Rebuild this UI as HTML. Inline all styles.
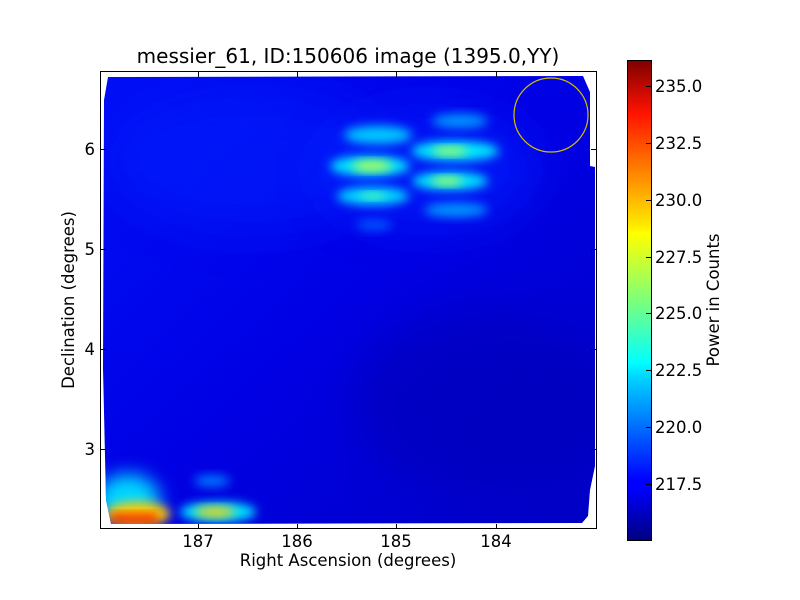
<!DOCTYPE html>
<html><head><style>
html,body{margin:0;padding:0;background:#fff;width:800px;height:600px;overflow:hidden}
svg text{font-family:"DejaVu Sans","Liberation Sans",sans-serif;fill:#000}
</style></head><body>
<svg width="800" height="600" viewBox="0 0 800 600" xmlns="http://www.w3.org/2000/svg">
<defs>
<linearGradient id="jet" x1="0" y1="1" x2="0" y2="0">
<stop offset="0" stop-color="#00007f"/>
<stop offset="0.11" stop-color="#0000ff"/>
<stop offset="0.125" stop-color="#0000ff"/>
<stop offset="0.34" stop-color="#00d4ff"/>
<stop offset="0.37" stop-color="#0ff"/>
<stop offset="0.5" stop-color="#7dff7a"/>
<stop offset="0.64" stop-color="#ff0"/>
<stop offset="0.66" stop-color="#ffe600"/>
<stop offset="0.89" stop-color="#ff1300"/>
<stop offset="1" stop-color="#7f0000"/>
</linearGradient>
<linearGradient id="bg" x1="0" y1="0" x2="1" y2="1">
<stop offset="0" stop-color="#0010f8"/>
<stop offset="0.5" stop-color="#0000e4"/>
<stop offset="1" stop-color="#0000c4"/>
</linearGradient>
<filter id="b4" x="-50%" y="-50%" width="200%" height="200%"><feGaussianBlur stdDeviation="5"/></filter>
<filter id="b8" x="-50%" y="-50%" width="200%" height="200%"><feGaussianBlur stdDeviation="9"/></filter>
<filter id="b20" x="-50%" y="-50%" width="200%" height="200%"><feGaussianBlur stdDeviation="22"/></filter>
<filter id="b1"><feGaussianBlur stdDeviation="1.2"/></filter>
<clipPath id="cp"><path d="M108 77 L583 76 L590 92 L590 166 L595 167 L595 466 L590 490 L588 516 L582 523 L111 524 L106 500 L103 368 L104 100 Z"/></clipPath>
</defs>
<text x="348" y="63" font-size="20" text-anchor="middle">messier_61, ID:150606 image (1395.0,YY)</text>
<g clip-path="url(#cp)">
<rect x="100" y="72" width="497" height="457" fill="url(#bg)"/>
<ellipse cx="480" cy="400" rx="130" ry="90" fill="#0000b0" opacity="0.5" filter="url(#b20)"/>
<ellipse cx="250" cy="160" rx="140" ry="70" fill="#0020ff" opacity="0.5" filter="url(#b20)"/>
<ellipse cx="430" cy="170" rx="110" ry="60" fill="#0020ff" opacity="0.6" filter="url(#b20)"/>
<ellipse cx="378" cy="135" rx="34" ry="9" fill="#00c8ff" filter="url(#b4)"/>
<ellipse cx="370" cy="166" rx="40" ry="10" fill="#00e8ff" filter="url(#b4)"/>
<ellipse cx="372" cy="166" rx="20" ry="5" fill="#c0ff40" filter="url(#b4)"/>
<ellipse cx="373" cy="196" rx="36" ry="9" fill="#00d8ff" filter="url(#b4)"/>
<ellipse cx="373" cy="196" rx="14" ry="3" fill="#60ffa0" filter="url(#b4)"/>
<ellipse cx="460" cy="121" rx="28" ry="7" fill="#0098ff" filter="url(#b4)"/>
<ellipse cx="455" cy="151" rx="44" ry="10" fill="#00e8ff" filter="url(#b4)"/>
<ellipse cx="450" cy="151" rx="18" ry="4" fill="#b0ff50" filter="url(#b4)"/>
<ellipse cx="450" cy="181" rx="38" ry="9" fill="#00e8ff" filter="url(#b4)"/>
<ellipse cx="447" cy="181" rx="16" ry="4" fill="#b0ff50" filter="url(#b4)"/>
<ellipse cx="456" cy="210" rx="32" ry="7" fill="#0098ff" filter="url(#b4)"/>
<ellipse cx="374" cy="225" rx="18" ry="6" fill="#0050ff" filter="url(#b4)"/>
<ellipse cx="128" cy="500" rx="32" ry="26" fill="#00d8ff" filter="url(#b8)"/>
<ellipse cx="138" cy="514" rx="32" ry="12" fill="#ffcc00" filter="url(#b4)"/>
<rect x="110" y="514" width="48" height="10" fill="#ee2000" filter="url(#b4)"/>
<ellipse cx="218" cy="512" rx="38" ry="10" fill="#00e8ff" filter="url(#b4)"/>
<ellipse cx="215" cy="512" rx="20" ry="5" fill="#ffd000" filter="url(#b4)"/>
<ellipse cx="212" cy="481" rx="18" ry="6" fill="#0078ff" filter="url(#b4)"/>
</g>
<circle cx="551" cy="115" r="37" fill="none" stroke="#d4c000" stroke-width="1.2"/>
<rect x="100.5" y="71.5" width="496" height="457" fill="none" stroke="#000" stroke-width="1"/>
<g stroke="#000" stroke-width="1">
<path d="M198.5 529v-5M297.5 529v-5M396.5 529v-5M496.5 529v-5M198.5 72v5M297.5 72v5M396.5 72v5M496.5 72v5"/>
<path d="M101 149.5h5M101 249.5h5M101 349.5h5M101 449.5h5M596 149.5h-5M596 249.5h-5M596 349.5h-5M596 449.5h-5"/>
</g>
<g font-size="16.5" text-anchor="middle">
<text x="198" y="547">187</text><text x="297" y="547">186</text><text x="396" y="547">185</text><text x="496" y="547">184</text>
</g>
<g font-size="16.5" text-anchor="end">
<text x="95" y="155">6</text><text x="95" y="255">5</text><text x="95" y="355">4</text><text x="95" y="455">3</text>
</g>
<text x="348" y="566" font-size="16.5" text-anchor="middle">Right Ascension (degrees)</text>
<text transform="translate(74 300) rotate(-90)" font-size="16.5" text-anchor="middle">Declination (degrees)</text>
<rect x="627.5" y="60.5" width="24" height="480" fill="url(#jet)" stroke="#000" stroke-width="1"/>
<g stroke="#000"><path d="M646 86.5h5M646 143.5h5M646 200.5h5M646 257.5h5M646 313.5h5M646 370.5h5M646 427.5h5M646 484.5h5"/></g>
<g font-size="16.5">
<text x="655" y="92">235.0</text><text x="655" y="149">232.5</text><text x="655" y="206">230.0</text><text x="655" y="263">227.5</text><text x="655" y="319">225.0</text><text x="655" y="376">222.5</text><text x="655" y="433">220.0</text><text x="655" y="490">217.5</text>
</g>
<text transform="translate(719 300) rotate(-90)" font-size="16.5" text-anchor="middle">Power in Counts</text>
</svg>
</body></html>
